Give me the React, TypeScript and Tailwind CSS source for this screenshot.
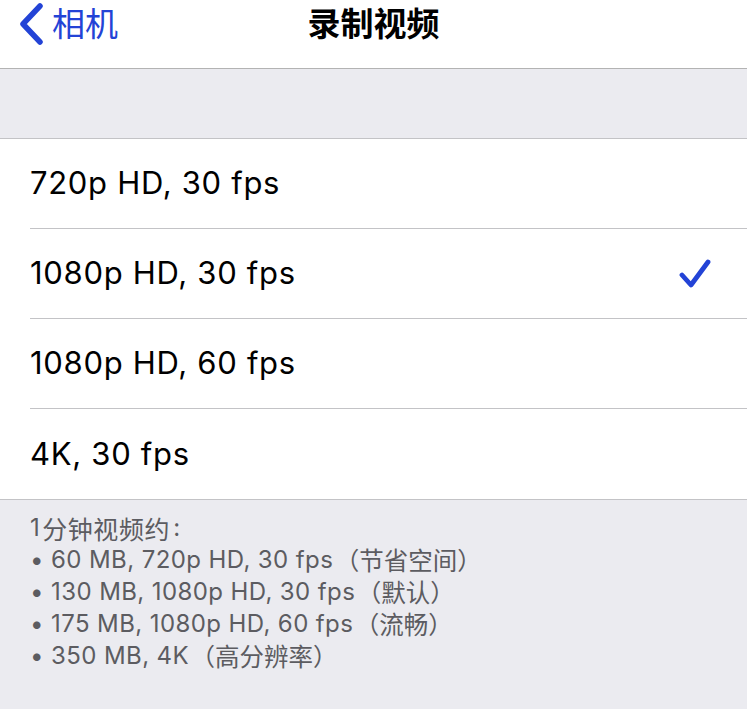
import React from 'react';

const font = { fontFamily: 'Inter, "Noto Sans CJK SC", sans-serif' };
const cjk = { fontFamily: '"Noto Sans CJK SC", sans-serif' };

const options = ['720p HD, 30 fps', '1080p HD, 30 fps', '1080p HD, 60 fps', '4K, 30 fps'];
const selected = 1;

const notes: [string, string][] = [
	['• 60 MB, 720p HD, 30 fps', '节省空间'],
	['• 130 MB, 1080p HD, 30 fps', '默认'],
	['• 175 MB, 1080p HD, 60 fps', '流畅'],
	['• 350 MB, 4K', '高分辨率'],
];

const App: React.FC = () => {
	return (
		<div className="w-[747px] h-[709px] bg-[#ebebf0] overflow-hidden" style={font}>
			{/* nav bar */}
			<div className="relative h-[69px] bg-white border-b border-[#b3b3b3] flex items-start">
				<div className="flex items-center pl-[18px] pt-[3px] text-[#2343d6]">
					<svg width="26" height="42" viewBox="0 0 26 42" fill="none">
						<path d="M22 3 L5 21 L22 39" stroke="currentColor" strokeWidth="5.5" strokeLinecap="round" strokeLinejoin="round" />
					</svg>
					<span className="ml-[8px] text-[33px] leading-[42px]">相机</span>
				</div>
				<div className="absolute left-0 right-0 top-[3px] text-center text-[33px] leading-[42px] font-semibold text-black">
					录制视频
				</div>
			</div>

			{/* spacer band */}
			<div className="h-[70px] border-b border-[#c3c3c6]" />

			{/* option list */}
			<div className="bg-white border-b border-[#c3c3c6]">
				{options.map((label, i) => (
					<div key={label} className="pl-[30px]">
						<div
							className={
								'h-[90px] flex items-center justify-between pr-[36px] ' +
								(i < options.length - 1 ? 'border-b border-[#c3c3c6]' : '')
							}
						>
							<span className="text-[31px] text-black tracking-[0.7px]">{label}</span>
							{i === selected && (
								<svg width="32" height="30" viewBox="0 0 32 30" fill="none" className="text-[#2343d6]">
									<path d="M3 16 L12 26 L29 3" stroke="currentColor" strokeWidth="4.8" strokeLinecap="round" strokeLinejoin="round" />
								</svg>
							)}
						</div>
					</div>
				))}
			</div>

			{/* footer */}
			<div className="pl-[30px] pt-[12px] text-[24px] leading-[32px] text-[#5c5c61] tracking-[0.4px]">
				<div className="h-[32px] flex items-center whitespace-nowrap">
					<span>1</span>
					<span className="text-[25px] tracking-[0.6px] ml-[2px] leading-[32px]" style={cjk}>分钟视频约</span>
					<span className="ml-[3px]">:</span>
				</div>
				{notes.map(([latin, zh]) => (
					<div key={latin} className="h-[32px] flex items-center whitespace-nowrap text-[24.5px]">
						<span className="text-[24px]">{latin}</span>
						<span className="inline-block w-[26px] text-right leading-[32px] tracking-[0px]" style={cjk}>（</span>
						<span className="leading-[32px] tracking-[0px]" style={cjk}>{zh}</span>
						<span className="inline-block w-[22px] text-left leading-[32px] tracking-[0px]" style={cjk}>）</span>
					</div>
				))}
			</div>
		</div>
	);
};

export default App;
